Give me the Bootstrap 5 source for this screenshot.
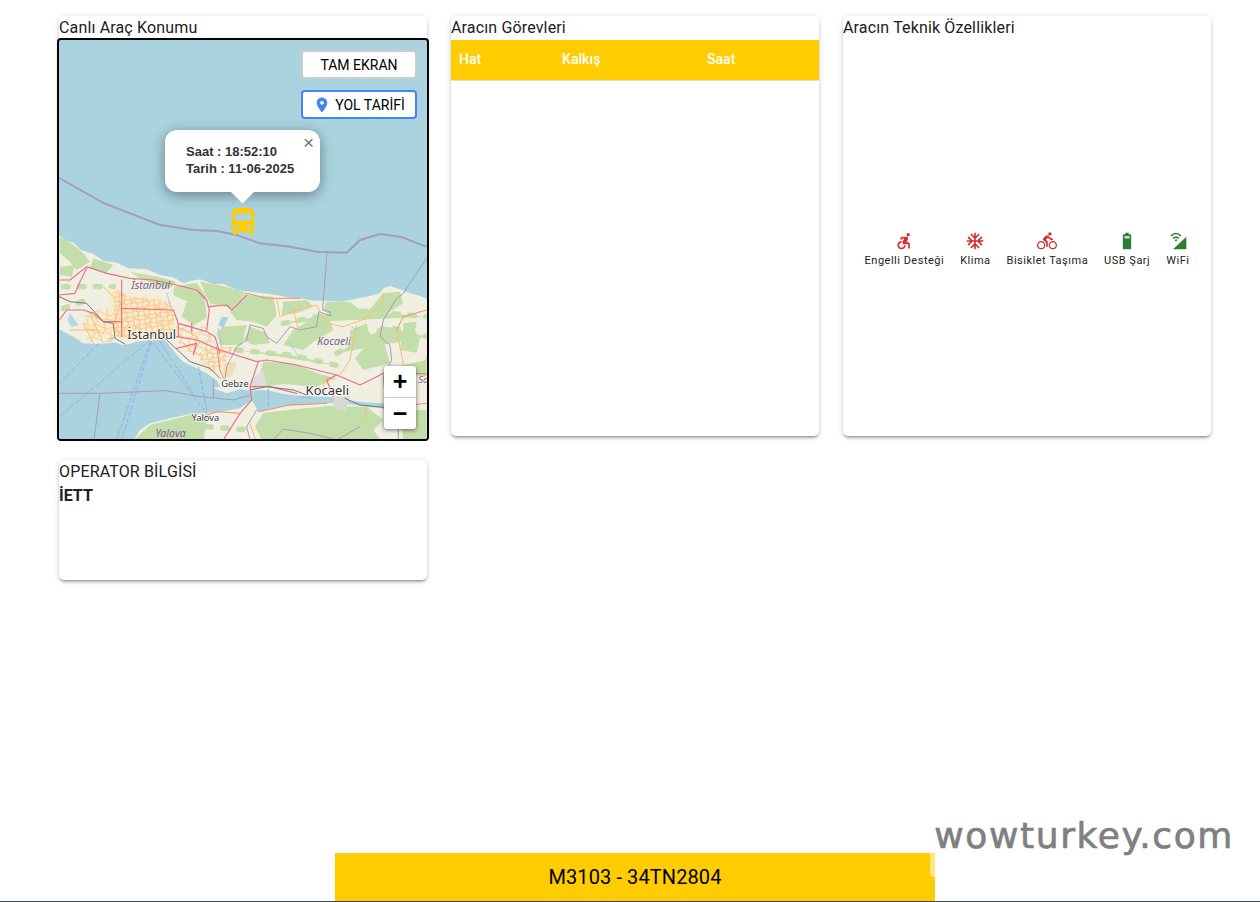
<!DOCTYPE html>
<html lang="tr">
<head>
    <meta charset="UTF-8">
    <meta name="viewport" content="width=device-width, initial-scale=1.0">
    <title>M3103 - 34TN2804</title>
    <link href="https://cdn.jsdelivr.net/npm/bootstrap@5.3.0/dist/css/bootstrap.min.css" rel="stylesheet">
    <style>
        body { font-family: Roboto, "Liberation Sans", sans-serif; color: #212121; min-height: 100vh; }
        .page-wrap { min-height: 902px; }
        .panel-grid { display: grid; grid-template-columns: repeat(3, 368px); gap: 24px; padding: 16px 0 0 59px; }
        .panel { background: #fff; border-radius: 5px; height: 420px; box-shadow: 0 3px 3px -2px rgba(0,0,0,.3), 0 2px 3px 0 rgba(0,0,0,.14), 0 1px 6px 0 rgba(0,0,0,.12); }
        .panel-short { height: 120px; }
        .panel-title { font-size: 16px; line-height: 24px; height: 22px; letter-spacing: .15px; }
        .map-box { position: relative; height: 403px; margin: 0 -2px; border: 2px solid #000; border-radius: 4px; overflow: hidden; background: #aad3df; }
        .map-svg { display: block; width: 368px; height: 399px; }
        .map-btn { position: absolute; right: 10px; width: 116px; height: 29px; padding-top: 1px; background: #fff; border-radius: 4px; color: #000; font-size: 14px; display: flex; align-items: center; justify-content: center; }
        .map-btn-full { top: 10px; border: 2px solid #ccc; }
        .map-btn-route { top: 50px; border: 2px solid #4285f4; }
        .map-popup { position: absolute; left: 106px; top: 90px; width: 155px; height: 62px; background: #fff; border-radius: 12px; box-shadow: 0 3px 14px rgba(0,0,0,.4); font: bold 13px/17px "Liberation Sans", sans-serif; color: #333; padding: 13px 0 0 21px; }
        .map-popup::after { content: ""; position: absolute; left: 69px; top: 53px; width: 17px; height: 17px; background: #fff; transform: rotate(45deg); }
        .popup-x { position: absolute; right: 6px; top: 4px; font: 400 19px/18px "Liberation Sans", sans-serif; color: #757575; }
        .bus-pin { position: absolute; left: 167px; top: 165px; }
        .zoom-box { position: absolute; left: 325px; top: 326px; width: 32px; height: 63px; background: #fff; border-radius: 3px; box-shadow: 0 1px 4px rgba(0,0,0,.55); }
        .zoom-btn { height: 31px; display: flex; align-items: center; justify-content: center; font: bold 25px/1 "Liberation Sans", sans-serif; color: #000; }
        .zoom-btn + .zoom-btn { border-top: 1px solid #ccc; }
        .task-head th { background: #ffcc00; color: #fff; font-weight: 500; font-size: 14px; line-height: 20px; padding: 9px 8px 11px; border-bottom: 1px solid #ddd; letter-spacing: .05px; }
        .task-table { margin: 2px 0 0; table-layout: fixed; }
        .feature-row { padding-top: 193px; font-size: 11px; letter-spacing: .5px; color: #212121; }
        .feature-item { line-height: 16px; }
        .feature-item svg { display: block; margin: 0 auto 2px; }
        .ic-red { fill: #d32f2f; }
        .ic-green { fill: #2e7d32; }
        .op-name { margin-top: 2px; line-height: 24px; }
        .bottom-bar { width: 600px; height: 48px; background: #ffcc00; color: #000; font-size: 20px; line-height: 48px; letter-spacing: .1px; text-align: center; margin-left: 335px; }
        .bottom-line { border-bottom: 1px solid #37474f; }
        .bar-notch { position: absolute; right: 325px; bottom: 25px; width: 5px; height: 24px; background: #ffe680; border-radius: 0 0 0 4px; }
        .site-mark { position: absolute; right: 26px; bottom: 44px; font: 36px/44px "DejaVu Sans", sans-serif; color: #808080; letter-spacing: 1.6px; -webkit-text-stroke: .7px #808080; }
    </style>
</head>
<body>
    <div class="page-wrap position-relative d-flex flex-column">
        <div class="panel-grid">
            <div class="panel">
                <div class="panel-title">Canlı Araç Konumu</div>
                <div class="map-box">
                    <svg class="map-svg" viewBox="59 40 368 399" xmlns="http://www.w3.org/2000/svg">
                        <defs>
                            <pattern id="cityNet" width="34" height="26" patternUnits="userSpaceOnUse" patternTransform="rotate(-8)">
                                <path d="M0 6 L12 10 20 3 34 8 M6 0 L10 13 5 26 M24 0 L20 14 27 26 M0 19 L14 15 24 21 34 17" fill="none" stroke="#fbc47c" stroke-width="3"/>
                            </pattern>
                            <pattern id="cityNetLoose" width="52" height="40" patternUnits="userSpaceOnUse" patternTransform="rotate(12)">
                                <path d="M0 10 L20 16 34 6 52 12 M10 0 L16 22 8 40 M38 0 L32 24 42 40 M0 30 L24 26 52 32" fill="none" stroke="#fcc57e" stroke-width="2.5"/>
                            </pattern>
                            <filter id="soft"><feGaussianBlur stdDeviation="2.2"/></filter>
                            <filter id="tile"><feGaussianBlur stdDeviation=".9"/></filter>
                        </defs>
                        <g transform="translate(50 230) scale(.33333)" fill="none" stroke-linejoin="round" stroke-linecap="round">
                            <g filter="url(#tile)">
                            <!-- land -->
                            <path fill="#f0efe2" d="M28 15 L48 32 70 38 92 60 130 72 160 92 200 98 235 115 290 118 330 135 370 142 400 160 425 152 450 148 490 162 520 162 560 180 600 185 640 190 680 195 720 203 750 205 790 212 830 212 870 215 900 210 950 200 990 190 1000 175 1020 168 1050 178 1080 190 1110 198 1135 208 V640 H28 Z"/>
                            <!-- forest -->
                            <g fill="#c3deaa" filter="url(#soft)">
                                <path d="M30 22 L70 45 100 70 120 95 80 120 60 95 30 70 Z"/>
                                <path d="M30 110 L75 105 65 140 30 135 Z"/>
                                <path d="M130 85 L190 105 170 128 120 115 Z"/>
                                <path d="M240 125 L330 142 380 155 360 175 280 150 Z"/>
                                <path d="M372 170 L440 158 470 200 450 225 400 210 370 195 Z"/>
                                <path d="M410 215 L465 210 470 265 430 285 395 260 Z"/>
                                <path d="M450 155 L520 168 590 188 545 235 480 220 Z"/>
                                <path d="M590 195 L670 200 680 255 650 290 610 275 560 270 540 245 Z"/>
                                <path d="M600 290 L650 310 660 340 610 345 580 330 Z"/>
                                <path d="M520 290 L590 285 575 345 510 345 500 310 Z"/>
                                <path d="M700 215 L770 210 790 230 740 250 695 255 Z"/>
                                <path d="M730 300 L800 260 840 270 850 300 790 335 760 360 700 345 Z"/>
                                <path d="M830 215 L900 215 930 240 860 270 820 240 Z"/>
                                <path d="M900 300 L950 280 960 320 905 345 Z"/>
                                <path d="M640 395 L730 400 800 430 860 445 800 470 700 462 640 470 630 430 Z"/>
                                <path d="M1000 190 L1050 185 1060 220 990 265 950 250 Z"/>
                                <path d="M1060 280 L1100 275 1095 305 1060 305 Z"/>
                                <path d="M1055 330 L1110 325 1100 368 1050 360 Z"/>
                                <path d="M950 345 L1000 330 1020 400 940 420 915 385 Z"/>
                                <path d="M1040 410 L1130 390 1130 440 1060 430 Z"/>
                                <path d="M640 548 L830 528 950 530 1000 570 970 600 1000 640 640 640 615 590 Z"/>
                                <path d="M300 585 L420 555 470 562 460 640 242 640 Z"/>
                                <path d="M1050 540 L1130 540 1130 640 1060 640 Z"/>
                                <g stroke="#c3deaa" stroke-width="16" stroke-dasharray="14 34">
                                    <path d="M700 280 L900 240 1130 260"/>
                                    <path d="M860 370 L1010 290 1130 320"/>
                                    <path d="M560 360 L720 375 880 410"/>
                                    <path d="M40 170 L190 170"/>
                                    <path d="M40 235 L110 210"/>
                                    <path d="M470 590 L600 600"/>
                                </g>
                            </g>
                            <!-- marmara -->
                            <path fill="#aad3df" d="M28 298 L50 310 70 320 100 340 140 342 200 338 215 345 240 342 270 330 300 330 345 330 365 355 385 380 400 395 440 415 470 430 500 450 510 470 490 475 530 490 570 478 600 482 650 480 700 492 750 497 830 500 870 505 900 512 960 518 1005 520 1005 535 950 530 880 520 830 520 770 525 700 527 625 545 605 510 570 535 500 548 420 552 360 565 300 580 270 600 245 640 28 640 Z"/>
                            <path fill="#aad3df" d="M178 278 L195 302 190 330 170 325 172 300 Z"/>
                            <path fill="#b8d7e6" d="M60 250 L85 285 65 292 52 270 Z"/>
                            <path fill="#aad3df" d="M515 260 L535 262 520 295 505 285 Z"/>
                            <!-- city -->
                            <path fill="#f6ecd0" d="M160 170 L240 190 340 200 375 240 365 300 340 330 240 335 190 320 150 330 110 310 100 270 190 240 Z"/>
                            <path fill="url(#cityNetLoose)" d="M100 250 L190 230 190 340 110 335 Z"/>
                            <path fill="url(#cityNet)" d="M190 170 L235 200 300 205 360 215 375 255 365 310 320 320 240 322 195 320 Z"/>
                            <path fill="url(#cityNet)" d="M440 375 L470 355 550 350 535 385 505 420 480 425 Z"/>
                            <path fill="url(#cityNetLoose)" d="M380 280 L470 290 500 350 430 380 385 340 Z"/>
                            <path fill="#dcdcd8" d="M600 450 L640 420 650 470 610 480 Z"/>
                            <path fill="#d8d8d4" d="M850 500 L900 500 885 545 850 535 Z"/>
                            <path fill="#f4dcb6" d="M520 400 L560 395 545 440 520 440 Z"/>
                            <!-- water courses -->
                            <g stroke="#9cc8ea" stroke-width="2.5">
                                <path d="M350 190 L365 235"/>
                                <path d="M505 295 L515 350"/>
                                <path d="M720 340 L745 380"/>
                                <path d="M905 290 L925 300"/>
                            </g>
                            <!-- boundaries -->
                            <g stroke="#a79cb8" stroke-width="3">
                                <path d="M28 490 L150 490 350 482 450 500 550 510 600 495"/>
                                <path d="M150 490 L132 630"/>
                                <path d="M490 450 V503"/>
                                <path d="M831 68 L818 240 840 245 842 258 806 245 800 290 750 300 720 290 680 340 650 320 640 295 600 285 590 330 560 350 530 410 525 450"/>
                                <path d="M1130 85 L1060 190 1040 205 1000 270 990 320 1020 345 1025 390 1000 440 1005 500 1045 600 1045 630"/>
                                <path d="M620 540 L590 590 600 630"/>
                                <path d="M670 630 L700 597 780 610 860 630 930 590"/>
                            </g>
                            <g stroke="#7ea0e8" stroke-width="2" stroke-dasharray="12 8">
                                <path d="M300 330 L28 560"/>
                                <path d="M300 335 L200 630"/>
                                <path d="M305 335 L215 630"/>
                                <path d="M145 340 L28 460"/>
                                <path d="M310 340 L470 550"/>
                                <path d="M330 335 L430 490"/>
                                <path d="M445 410 L470 540"/>
                                <path d="M655 475 V530"/>
                                <path d="M750 500 L790 505"/>
                            </g>
                            <!-- minor roads -->
                            <g stroke="#fbbf6c" stroke-width="3">
                                <path d="M160 170 L210 220 190 290 220 320"/>
                                <path d="M100 280 L130 340"/>
                                <path d="M60 300 L150 300"/>
                                <path d="M120 250 L150 320"/>
                                <path d="M680 205 L690 260 740 240 800 225 830 280 880 290 950 265 1000 215 1000 190"/>
                                <path d="M920 285 L900 390 870 435"/>
                                <path d="M600 580 L620 640"/>
                                <path d="M950 530 L940 570"/>
                                <path d="M380 290 L440 320 430 370 400 340"/>
                                <path d="M830 440 L820 470"/>
                                <path d="M1040 300 L1060 400 1040 445"/>
                                <path d="M1130 380 L1120 420"/>
                                <path d="M730 240 L745 300"/>
                            </g>
                            <!-- main roads -->
                            <g stroke="#ea6f8c" stroke-width="3.5">
                                <path d="M28 150 L60 150 110 110 170 130 240 145 310 150 380 165 440 180 470 210 478 240 470 300"/>
                                <path d="M28 195 L75 190 90 155 110 115"/>
                                <path d="M215 150 V320"/>
                                <path d="M28 270 L50 240 100 240 130 250 160 275 215 275"/>
                                <path d="M215 235 L370 240 385 280 470 305 495 320 510 370"/>
                                <path d="M380 320 L440 330 510 360 620 395 650 390 740 405 860 435 930 465 980 440 1010 425 1130 432"/>
                                <path d="M385 280 L385 320 M425 280 V305"/>
                                <path d="M475 230 L530 225 545 240 590 195"/>
                                <path d="M625 395 L600 470 605 510 570 550 520 630"/>
                                <path d="M600 470 L660 470 740 490"/>
                                <path d="M860 435 L830 450 850 500"/>
                                <path d="M380 355 L440 340 430 375"/>
                            </g>
                            <g stroke="#fc8d62" stroke-width="3">
                                <path d="M590 190 L650 205 750 205"/>
                                <path d="M625 545 L720 525 830 520"/>
                                <path d="M430 570 L500 545 570 550"/>
                                <path d="M1000 535 L1130 520"/>
                                <path d="M1040 300 L1060 260 1130 240"/>
                                <path d="M500 350 L510 420 520 445"/>
                            </g>
                            <!-- rail -->
                            <g stroke="#777" stroke-width="3">
                                <path d="M28 200 L60 215 110 220 160 275 190 280 195 325 225 342"/>
                                <path d="M345 325 L420 395 480 415 510 445"/>
                                <path d="M600 480 L650 470 730 480 770 495"/>
                                <path d="M885 505 L930 525 1000 532"/>
                            </g>
                            <!-- sea border -->
                            <path stroke="#a79cb8" stroke-width="6" d="M28 -156 L100 -115 160 -81 240 -50 330 -15 430 0 500 3 560 15 630 40 720 50 800 65 890 68 930 30 990 12 1050 20 1135 52"/>
                            </g>
                            <!-- labels -->
                            <g font-family="'Noto Sans', sans-serif" text-anchor="middle">
                                <text x="302" y="178" font-size="32" font-style="italic" fill="#7f5f8f">İstanbul</text>
                                <text x="852" y="346" font-size="32" font-style="italic" fill="#7f5f8f">Kocaeli</text>
                                <text x="362" y="621" font-size="32" font-style="italic" fill="#7f5f8f">Yalova</text>
                                <text x="305" y="327" font-size="38" fill="#333" stroke="#fff" stroke-width="4" paint-order="stroke">İstanbul</text>
                                <text x="555" y="470" font-size="28" fill="#333" stroke="#fff" stroke-width="4" paint-order="stroke">Gebze</text>
                                <text x="466" y="572" font-size="28" fill="#333" stroke="#fff" stroke-width="4" paint-order="stroke">Yalova</text>
                                <text x="832" y="496" font-size="39" fill="#333" stroke="#fff" stroke-width="4" paint-order="stroke">Kocaeli</text>
                                <text x="1120" y="458" font-size="28" font-style="italic" fill="#7f5f8f">So</text>
                            </g>
                        </g>
                    </svg>
                    <svg class="bus-pin" width="34" height="34" viewBox="0 0 24 24" fill="#ffcc00"><path d="M4 16c0 .88.39 1.67 1 2.22V20c0 .55.45 1 1 1h1c.55 0 1-.45 1-1v-1h8v1c0 .55.45 1 1 1h1c.55 0 1-.45 1-1v-1.78c.61-.55 1-1.34 1-2.22V6c0-3.5-3.58-4-8-4s-8 .5-8 4v10zm3.5 1c-.83 0-1.5-.67-1.5-1.5S6.67 14 7.5 14s1.5.67 1.5 1.5S8.33 17 7.5 17zm9 0c-.83 0-1.5-.67-1.5-1.5s.67-1.5 1.5-1.5 1.5.67 1.5 1.5-.67 1.5-1.5 1.5zm1.5-6H6V6h12v5z"/></svg>
                    <div class="map-popup">
                        Saat : 18:52:10<br>Tarih : 11-06-2025
                        <span class="popup-x">×</span>
                    </div>
                    <div class="map-btn map-btn-full">TAM EKRAN</div>
                    <div class="map-btn map-btn-route gap-1">
                        <svg width="18" height="18" viewBox="0 0 24 24" fill="#4285f4"><path d="M12 2C8.13 2 5 5.13 5 9c0 5.25 7 13 7 13s7-7.75 7-13c0-3.87-3.13-7-7-7zm0 9.5c-1.38 0-2.5-1.12-2.5-2.5s1.12-2.5 2.5-2.5 2.5 1.12 2.5 2.5-1.12 2.5-2.5 2.5z"/></svg>
                        <span>YOL TARİFİ</span>
                    </div>
                    <div class="zoom-box">
                        <div class="zoom-btn">+</div>
                        <div class="zoom-btn">−</div>
                    </div>
                </div>
            </div>

            <div class="panel">
                <div class="panel-title">Aracın Görevleri</div>
                <table class="table task-table">
                    <colgroup><col style="width:103px"><col style="width:145px"><col></colgroup>
                    <thead class="task-head"><tr><th>Hat</th><th>Kalkış</th><th>Saat</th></tr></thead>
                </table>
            </div>

            <div class="panel">
                <div class="panel-title">Aracın Teknik Özellikleri</div>
                <div class="d-flex justify-content-center feature-row gap-3">
                    <div class="feature-item text-center">
                        <svg class="ic-red" width="20" height="20" viewBox="0 0 24 24"><circle cx="17" cy="4.54" r="2"/><path d="M14 17h-2c0 1.65-1.35 3-3 3s-3-1.35-3-3 1.35-3 3-3v-2c-2.76 0-5 2.24-5 5s2.24 5 5 5 5-2.24 5-5zm3-3.5h-1.86l1.67-3.67C17.42 8.5 16.44 7 14.96 7h-5.2c-.81 0-1.54.47-1.87 1.2L7.22 10l1.92.53L9.79 9H12l-1.83 4.1c-.6 1.33.39 2.9 1.85 2.9H17v5h2v-5.5c0-1.1-.9-2-2-2z"/></svg>
                        Engelli Desteği
                    </div>
                    <div class="feature-item text-center">
                        <svg class="ic-red" width="20" height="20" viewBox="0 0 24 24"><path d="M22 11h-4.17l3.24-3.24-1.41-1.42L15 11h-2V9l4.66-4.66-1.42-1.41L13 6.17V2h-2v4.17L7.76 2.93 6.34 4.34 11 9v2H9L4.34 6.34 2.93 7.76 6.17 11H2v2h4.17l-3.24 3.24 1.41 1.42L9 13h2v2l-4.66 4.66 1.42 1.41L11 17.83V22h2v-4.17l3.24 3.24 1.42-1.41L13 15v-2h2l4.66 4.66 1.41-1.42L17.83 13H22z"/></svg>
                        Klima
                    </div>
                    <div class="feature-item text-center">
                        <svg class="ic-red" width="20" height="20" viewBox="0 0 24 24"><path d="M15.5 5.5c1.1 0 2-.9 2-2s-.9-2-2-2-2 .9-2 2 .9 2 2 2zM5 12c-2.8 0-5 2.2-5 5s2.2 5 5 5 5-2.2 5-5-2.2-5-5-5zm0 8.5c-1.9 0-3.5-1.6-3.5-3.5s1.6-3.5 3.5-3.5 3.5 1.6 3.5 3.5-1.6 3.5-3.5 3.5zm5.8-10l2.4-2.4.8.8c1.3 1.3 3 2.1 5.1 2.1V9c-1.5 0-2.7-.6-3.6-1.5l-1.9-1.9c-.5-.4-1-.6-1.6-.6s-1.1.2-1.4.6L7.8 8.4c-.4.4-.6.9-.6 1.4 0 .6.2 1.1.6 1.4L11 14v5h2v-6.2l-2.2-2.3zM19 12c-2.8 0-5 2.2-5 5s2.2 5 5 5 5-2.2 5-5-2.2-5-5-5zm0 8.5c-1.9 0-3.5-1.6-3.5-3.5s1.6-3.5 3.5-3.5 3.5 1.6 3.5 3.5-1.6 3.5-3.5 3.5z"/></svg>
                        Bisiklet Taşıma
                    </div>
                    <div class="feature-item text-center">
                        <svg class="ic-green" width="20" height="20" viewBox="0 0 24 24"><path d="M15.67 4H14V2h-4v2H8.33C7.6 4 7 4.6 7 5.33v15.33C7 21.4 7.6 22 8.33 22h7.33c.74 0 1.34-.6 1.34-1.33V5.33C17 4.6 16.4 4 15.67 4z"/><path fill="#cfe3d0" d="M9 6h6v3H9z"/></svg>
                        USB Şarj
                    </div>
                    <div class="feature-item text-center">
                        <svg class="ic-green" width="20" height="20" viewBox="0 0 24 24"><path d="M22 7V22H6Z"/><path fill="none" stroke="#2e7d32" stroke-width="1.8" d="M3.5 6C7 2 12 2 15.5 6M6 9C8 7 11 7 13 9"/><circle cx="9.6" cy="11.2" r="1.3"/></svg>
                        WiFi
                    </div>
                </div>
            </div>

            <div class="panel panel-short">
                <div class="panel-title">OPERATOR BİLGİSİ</div>
                <div class="fw-bold op-name">İETT</div>
            </div>
        </div>

        <div class="mt-auto bottom-line">
            <div class="bottom-bar">M3103 - 34TN2804</div>
        </div>
        <div class="bar-notch"></div>
        <div class="site-mark">wowturkey.com</div>
    </div>

    <script src="https://cdn.jsdelivr.net/npm/bootstrap@5.3.0/dist/js/bootstrap.bundle.min.js"></script>
</body>
</html>
